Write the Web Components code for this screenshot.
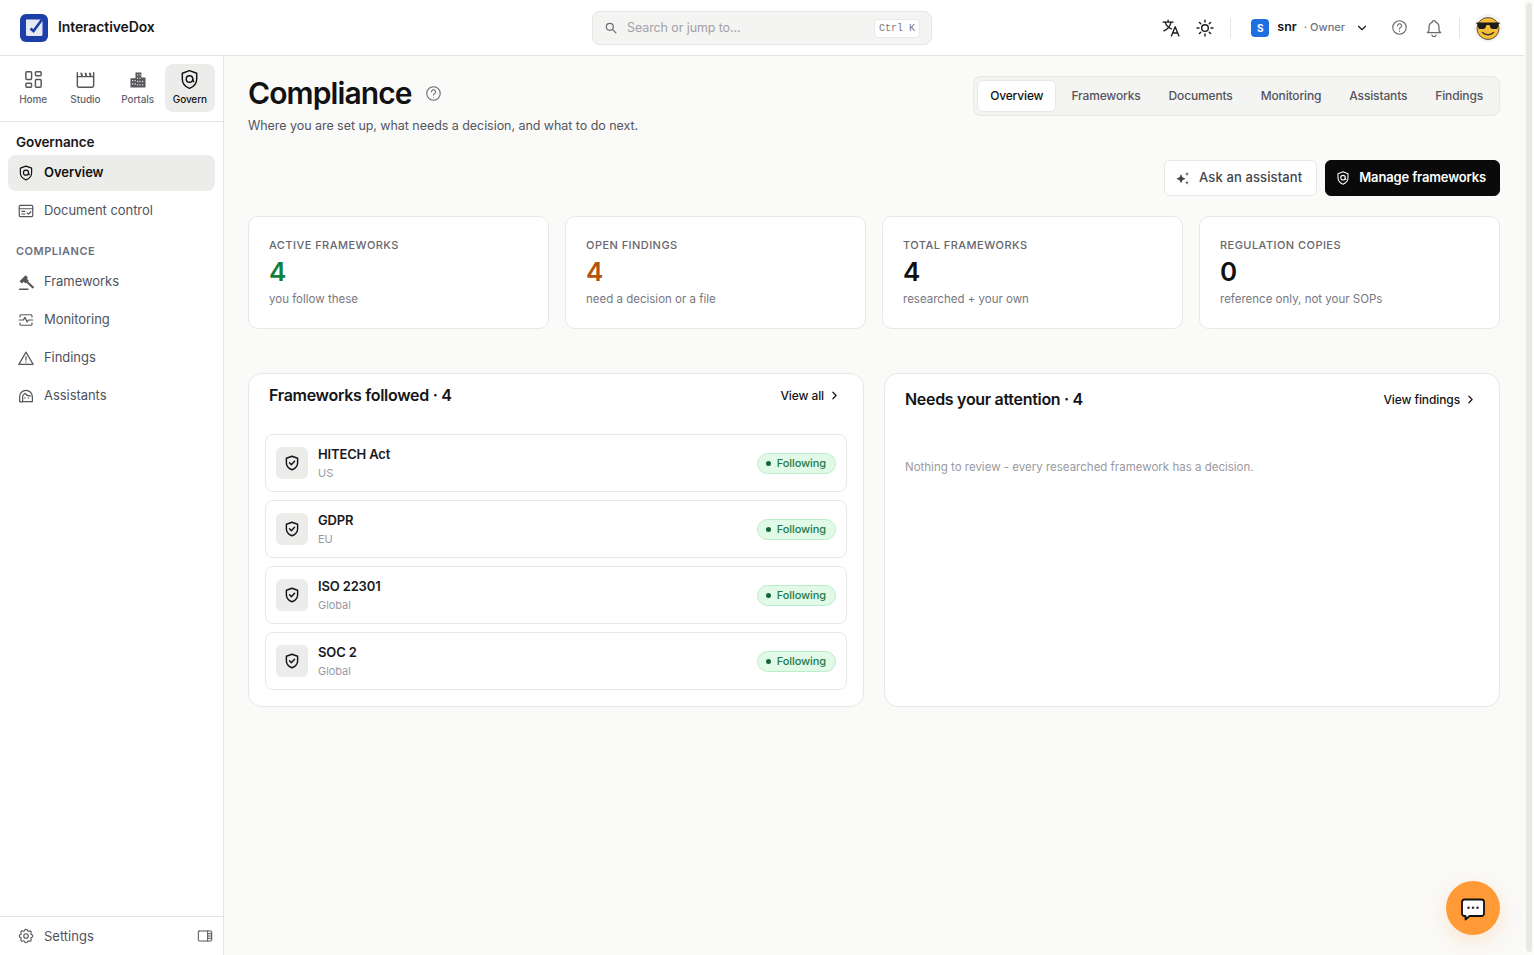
<!DOCTYPE html>
<html lang="en">
<head>
<meta charset="utf-8">
<title>Compliance - InteractiveDox</title>
<style>
  html, body { margin: 0; height: 100%; overflow: hidden; background: #fff; }
  body { font-family: Inter, "Liberation Sans", sans-serif; color: #111; display: flex; }
</style>
</head>
<body>
<app-shell></app-shell>
<fake-scrollbar></fake-scrollbar>

<script>
// shared stroke icons, keyed by name
const ICONS = {
  home: '<path d="M5 4h4a1 1 0 0 1 1 1v6a1 1 0 0 1-1 1H5a1 1 0 0 1-1-1V5a1 1 0 0 1 1-1z"/><path d="M5 16h4a1 1 0 0 1 1 1v2a1 1 0 0 1-1 1H5a1 1 0 0 1-1-1v-2a1 1 0 0 1 1-1z"/><path d="M15 12h4a1 1 0 0 1 1 1v6a1 1 0 0 1-1 1h-4a1 1 0 0 1-1-1v-6a1 1 0 0 1 1-1z"/><path d="M15 4h4a1 1 0 0 1 1 1v2a1 1 0 0 1-1 1h-4a1 1 0 0 1-1-1V5a1 1 0 0 1 1-1z"/>',
  studio: '<path d="M3.5 9h17v9.500a1.500 1.500 0 0 1-1.500 1.500H5a1.500 1.500 0 0 1-1.500-1.500z"/><path d="M3.500 5v4M20.500 5v4"/><path fill="currentColor" stroke="none" d="M6.500 5h2l1 4h-2zM11 5h2l1 4h-2zM15.500 5h2l1 4h-2z"/>',
  portals: '<path fill="currentColor" stroke="none" d="M9 3h7v6h5v12H3V10h6V3zm2 2v1.600h1.200V5H11zm2.800 0v1.600H15V5h-1.200zM11 9v1.600h1.200V9H11zm2.800 0v1.600H15V9h-1.200zM5 12v1.600h1.200V12H5zm3 0v1.600h1.200V12H8zm3 1v1.600h1.200V13H11zm2.800 0v1.600H15V13h-1.200zm3.200 0v1.600h1.200V13H17zM5 16v1.600h1.200V16H5zm3 0v1.600h1.200V16H8zm3 1v1.600h1.200V17H11zm2.800 0v1.600H15V17h-1.200zm3.200 0v1.600h1.200V17H17z"/>',
  shield: '<path d="M12 2.800l7.500 2.700v6.200c0 4.400-3 7.800-7.500 9.500-4.500-1.700-7.500-5.100-7.500-9.500V5.500z"/><circle cx="12" cy="11.500" r="3.400"/><path d="M15.400 11.500c0 1.500.3 2.400 1 2.800"/>',
  doc: '<rect x="3" y="4.500" width="18" height="15" rx="1.500"/><path d="M3 9h18"/><path d="M6.500 12.500h4M6.500 16h4"/><path d="M13.500 14.500l1.800 1.700 3-3.200"/>',
  gavel: '<path d="M3.500 21.500h11" stroke-width="2"/><path d="M5 12.500l8-8" stroke-width="4.500" stroke-linecap="butt"/><path d="M9.500 8l4 4" stroke-width="6" stroke-linecap="butt"/><path d="M12.500 11l8.500 8" stroke-width="3"/>',
  monitor: '<path d="M4 8V6.500A1.500 1.500 0 0 1 5.500 5h13A1.500 1.500 0 0 1 20 6.500V8"/><path d="M4 16v1.500A1.500 1.500 0 0 0 5.500 19h13a1.500 1.500 0 0 0 1.500-1.500V16"/><path d="M3 12h5.500l2-3.500 3 6 2-2.500H21"/>',
  alert: '<path d="M12 4.200L21.500 20.500h-19z"/><path d="M12 10v5M12 17.500v.3"/>',
  bot: '<path d="M4.500 19.500h-1v-6.500a8.500 8.500 0 0 1 17 0v6.500h-1"/><path d="M4.500 19.500c1 .8 2 .8 3 0V13c0-2 1.500-3.500 3-4.500 2 2.500 5 3.500 8 3.500"/><path d="M10.500 14.500v.5M15 14.500v.5"/><path d="M7.500 19.500h12"/>',
  settings: '<path d="M10.300 4.300c.4-1.700 3-1.700 3.400 0a1.700 1.700 0 0 0 2.600 1.100c1.500-.9 3.300.8 2.400 2.400a1.700 1.700 0 0 0 1.100 2.500c1.700.4 1.700 3 0 3.400a1.700 1.700 0 0 0-1.100 2.600c.9 1.500-.8 3.300-2.400 2.400a1.700 1.700 0 0 0-2.500 1.100c-.4 1.700-3 1.700-3.400 0a1.700 1.700 0 0 0-2.600-1.100c-1.500.9-3.300-.8-2.400-2.400a1.700 1.700 0 0 0-1.100-2.500c-1.700-.4-1.700-3 0-3.400a1.700 1.700 0 0 0 1.100-2.600c-.9-1.500.8-3.300 2.400-2.400 1 .6 2.300.1 2.500-1.100z"/><circle cx="12" cy="12" r="3"/>',
  panel: '<rect x="2" y="4.500" width="20" height="15" rx="1"/><path d="M16 4.500v15"/><path d="M16 8.500h6M16 12h6M16 15.500h6"/>',
  search: '<circle cx="10" cy="10" r="6"/><path d="M20.500 20.500L14.500 14.500"/>',
  translate: '<path d="M2.500 5h12M8.500 2.500V5"/><path d="M12 5c-.8 4.500-4 8.500-8.500 10.500"/><path d="M5 5c1 3.500 3.500 6.500 7.500 8"/><path d="M12.500 21.500l4.500-11 4.500 11M14 18h6"/>',
  sun: '<circle cx="12" cy="12" r="4"/><path d="M12 2.500v2.300M12 19.200v2.300M2.500 12h2.300M19.200 12h2.300M5.300 5.300l1.600 1.600M17.100 17.100l1.600 1.600M5.300 18.700l1.600-1.600M17.100 6.900l1.600-1.600"/>',
  chevdown: '<path d="M6 9l6 6 6-6"/>',
  chevright: '<path d="M9 6l6 6-6 6"/>',
  help: '<circle cx="12" cy="12" r="9.500"/><path d="M9.300 9.500a2.800 2.800 0 1 1 4.300 2.400c-1 .6-1.600 1.200-1.600 2.300"/><path d="M12 17.200v.2"/>',
  bell: '<path d="M10 5a2 2 0 1 1 4 0c2.800 1.200 4 3.500 4 6.200v3.300c0 1.300.7 2.200 2 3H4c1.300-.8 2-1.700 2-3v-3.300C6 8.500 7.200 6.200 10 5z"/><path d="M9.500 20.500a2.600 2.600 0 0 0 5 0"/>',
  sparkle: '<path fill="currentColor" stroke="none" d="M9 6l2.200 4.800 4.800 2.200-4.800 2.200L9 20l-2.200-4.800L2 13l4.800-2.200z"/><path fill="currentColor" stroke="none" d="M18 3l.8 2.200L21 6l-2.200.8L18 9l-.8-2.200L15 6l2.200-.8zM18 16l.8 2.200 2.200.8-2.200.8L18 22l-.8-2.200L15 19l2.200-.8z"/>',
  shieldcheck: '<path d="M12 3l7.500 2.700v5.800c0 4.500-3 7.800-7.500 9.500-4.500-1.700-7.500-5-7.500-9.500V5.700z"/><path d="M8.700 11.800l2.400 2.400 4.300-4.500"/>'
};

function icon(name, size, sw) {
  return `<svg width="${size}" height="${size}" viewBox="0 0 24 24" fill="none" stroke="currentColor" stroke-width="${sw || 1.7}" stroke-linecap="round" stroke-linejoin="round" aria-hidden="true">${ICONS[name]}</svg>`;
}

class TopBar extends HTMLElement {
  connectedCallback() {
    this.attachShadow({ mode: 'open' });
    this.shadowRoot.innerHTML = `
      <style>
        :host {
          display: grid;
          grid-template-columns: 1fr 340px 1fr;
          align-items: center;
          height: 55px;
          background: #fff;
          border-bottom: 1px solid #e5e5e3;
          padding: 0 22px 0 20px;
        }
        .brand { display: flex; align-items: center; gap: 10px; font-size: 14px; font-weight: 600; color: #17171a; letter-spacing: -0.12px; }
        .brand span { margin-top: -2px; }
        .search {
          display: flex; align-items: center; height: 34px; box-sizing: border-box;
          background: #f4f4f3; border: 1px solid #e5e5e3; border-radius: 8px; padding: 0 11px;
          color: #a1a1a6; font-size: 12.5px; letter-spacing: -0.1px; margin-left: 1px; margin-right: -1px;
        }
        .search svg { color: #6b6b70; margin-right: 9px; }
        .search span { margin-top: -1px; }
        kbd {
          margin-left: auto; background: #fff; border: 1px solid #e8e8e6; border-radius: 4px; letter-spacing: 0;
          font: 10px "Liberation Mono", monospace; color: #77777c; padding: 3px 4px 3px 4px; line-height: 11px; position: relative; top: 0.5px;
        }
        .right { display: flex; align-items: center; justify-content: flex-end; }
        .right svg { display: block; }
        .ic { color: #1b1b1f; }
        .sep { width: 1px; height: 20px; background: #e5e5e3; }
        .ws { width: 18px; height: 18px; border-radius: 4px; background: #1f6fe0; color: #fff; font-size: 10px; font-weight: 700; display: grid; place-items: center; }
        .name { font-size: 12.5px; font-weight: 600; color: #17171a; margin-left: 8px; margin-top: -2px; }
        .role { font-size: 11px; font-weight: 500; color: #6f7480; margin-left: 7px; margin-top: -1px; }
        .grey { color: #6b6b70; }
      </style>
      <div class="brand">
        <svg width="28" height="28" viewBox="0 0 28 28" aria-hidden="true">
          <rect width="28" height="28" rx="6" fill="#1c3faa"/>
          <path d="M7.500 5.500h14a1 1 0 0 1 1 1v14a1.500 1.500 0 0 1-1.500 1.500H7.500a1.500 1.500 0 0 1-1.500-1.500v-14a1 1 0 0 1 1.500-1z" fill="#e6eaf3"/>
          <path d="M10.500 14.500l3 2.500 8.500-11.500" fill="none" stroke="#1c3faa" stroke-width="2.600"/>
        </svg>
        <span>InteractiveDox</span>
      </div>
      <div class="search">${icon('search', 14, 2)}<span>Search or jump to...</span><kbd>Ctrl K</kbd></div>
      <div class="right">
        <span class="ic">${icon('translate', 20, 1.6)}</span>
        <span class="ic" style="margin-left:14px">${icon('sun', 20, 1.7)}</span>
        <span class="sep" style="margin-left:15px"></span>
        <span class="ws" style="margin-left:20px">S</span>
        <span class="name">snr</span>
        <span class="role">· Owner</span>
        <span class="ic" style="margin-left:10px">${icon('chevdown', 14, 2)}</span>
        <span class="grey" style="margin-left:22px">${icon('help', 17, 1.6)}</span>
        <span class="grey" style="margin-left:16px">${icon('bell', 20, 1.5)}</span>
        <span class="sep" style="margin-left:15px"></span>
        <svg style="margin-left:14px" width="28" height="28" viewBox="0 0 28 28" aria-hidden="true">
          <circle cx="14" cy="14" r="14" fill="#f3f3f2"/>
          <circle cx="14" cy="14.500" r="11" fill="#f6bd3b" stroke="#3a3325" stroke-width=".8"/>
          <path d="M2.500 8.500h23v1.500h-1l-.8 3.500c-.2 1-1 1.500-2 1.500h-3c-1.500 0-2.200-1-2.700-2.500l-.5-1.500h-3l-.5 1.500c-.5 1.500-1.200 2.500-2.700 2.500h-3c-1 0-1.800-.5-2-1.500l-.8-3.500h-1z" fill="#1c1c1c"/>
          <path d="M8.500 18.500c2.700 3 8.300 3 11 0" fill="none" stroke="#3a3325" stroke-width="1.300" stroke-linecap="round"/>
        </svg>
      </div>
    `;
  }
}

class RailItem extends HTMLElement {
  connectedCallback() {
    this.attachShadow({ mode: 'open' });
    const active = this.hasAttribute('active');
    const size = this.getAttribute('size') || 23;
    this.shadowRoot.innerHTML = `
      <style>
        :host {
          display: flex; flex-direction: column; align-items: center; justify-content: center;
          height: 48px; border-radius: 8px; font-size: 10px; line-height: 12px; font-weight: 500; gap: 2px; letter-spacing: -0.1px;
          color: ${active ? '#111' : '#5f6470'};
          background: ${active ? '#ececeb' : 'transparent'};
          box-sizing: border-box; padding-bottom: 3px;
        }
        .ico { height: 23px; display: grid; place-items: center; }
        svg { display: block; color: ${active ? '#111' : '#55555a'}; }
      </style>
      <div class="ico">${icon(this.getAttribute('icon'), size, 1.5)}</div>
      <slot></slot>
    `;
  }
}

class NavItem extends HTMLElement {
  connectedCallback() {
    this.attachShadow({ mode: 'open' });
    const active = this.hasAttribute('active');
    this.shadowRoot.innerHTML = `
      <style>
        :host {
          display: flex; align-items: center; gap: 9px; height: 36px; padding: 0 9px 0 9px;
          border-radius: 8px; font-size: 13px; letter-spacing: -0.05px;
          font-weight: ${active ? 600 : 400};
          color: ${active ? '#111' : '#4e5360'};
          background: ${active ? '#ececeb' : 'transparent'};
        }
        svg { display: block; flex: none; color: ${active ? '#111' : '#55555a'}; }
        span { margin-top: -2px; }
      </style>
      ${icon(this.getAttribute('icon'), 18, 1.6)}
      <span><slot></slot></span>
    `;
  }
}

class SideBar extends HTMLElement {
  connectedCallback() {
    this.attachShadow({ mode: 'open' });
    this.shadowRoot.innerHTML = `
      <style>
        :host {
          display: flex; flex-direction: column; width: 224px; box-sizing: border-box;
          background: #fff; border-right: 1px solid #e5e5e3; flex: none;
        }
        .rail { display: grid; grid-template-columns: repeat(4, 1fr); gap: 2px; padding: 8px 8px 9px; border-bottom: 1px solid #e5e5e3; }
        nav { display: flex; flex-direction: column; gap: 2px; padding: 0 8px; flex: 1; }
        h2 { font-size: 13.5px; font-weight: 600; color: #17171a; margin: 12px 16px 5px; line-height: 16px; letter-spacing: -0.1px; }
        h3 { font-size: 11px; font-weight: 600; letter-spacing: .5px; color: #6b7080; margin: 13px 8px 4px; line-height: 14px; }
        .foot { display: flex; align-items: center; height: 38px; border-top: 1px solid #e5e5e3; padding: 0 10px 0 17px; gap: 9px; font-size: 13px; color: #4e5360; }
        .foot svg { display: block; color: #55555a; }
        .foot svg:last-child { margin-left: auto; }
      </style>
      <div class="rail">
        <rail-item icon="home">Home</rail-item>
        <rail-item icon="studio">Studio</rail-item>
        <rail-item icon="portals" size="20">Portals</rail-item>
        <rail-item icon="shield" active>Govern</rail-item>
      </div>
      <h2>Governance</h2>
      <nav>
        <nav-item icon="shield" active>Overview</nav-item>
        <nav-item icon="doc">Document control</nav-item>
        <h3>COMPLIANCE</h3>
        <nav-item icon="gavel">Frameworks</nav-item>
        <nav-item icon="monitor">Monitoring</nav-item>
        <nav-item icon="alert">Findings</nav-item>
        <nav-item icon="bot">Assistants</nav-item>
      </nav>
      <div class="foot">${icon('settings', 18, 1.5)}<span>Settings</span>${icon('panel', 16, 1.5)}</div>
    `;
  }
}

class PageTabs extends HTMLElement {
  connectedCallback() {
    this.attachShadow({ mode: 'open' });
    const tabs = ['Overview', 'Frameworks', 'Documents', 'Monitoring', 'Assistants', 'Findings'];
    this.shadowRoot.innerHTML = `
      <style>
        :host {
          display: flex; gap: 2px; padding: 3px; height: 40px; box-sizing: border-box;
          background: #f4f4f3; border: 1px solid #e8e8e6; border-radius: 8px;
        }
        span { display: flex; align-items: center; padding: 0 12px 1px; font-size: 12px; font-weight: 500; letter-spacing: -0.15px; color: #55555d; border: 1px solid transparent; border-radius: 6px; }
        .on { background: #fff; color: #111; border-color: #e8e8e6; }
      </style>
      ${tabs.map((t, i) => `<span class="${i === 0 ? 'on' : ''}">${t}</span>`).join('')}
    `;
  }
}

class ActionButton extends HTMLElement {
  connectedCallback() {
    this.attachShadow({ mode: 'open' });
    const primary = this.hasAttribute('primary');
    this.shadowRoot.innerHTML = `
      <style>
        :host {
          display: flex; align-items: center; gap: 8px; height: 36px; box-sizing: border-box;
          padding: ${primary ? '0 13px 0 9px' : '0 14px 0 10px'}; border-radius: 6px; font-size: 13px;
          font-weight: ${primary ? 600 : 500};
          letter-spacing: ${primary ? '-0.15px' : '0.12px'};
          color: ${primary ? '#fff' : '#45454c'};
          background: ${primary ? '#0a0a0a' : '#fff'};
          border: 1px solid ${primary ? '#0a0a0a' : '#e8e8e6'};
        }
        svg { display: block; }
        span { margin-top: -2px; }
      </style>
      ${icon(this.getAttribute('icon'), 16, 1.6)}
      <span><slot></slot></span>
    `;
  }
}

class StatCard extends HTMLElement {
  connectedCallback() {
    this.attachShadow({ mode: 'open' });
    this.shadowRoot.innerHTML = `
      <style>
        :host {
          display: block; height: 113px; box-sizing: border-box; padding: 21px 20px;
          background: #fff; border: 1px solid #e8e8e6; border-radius: 10px;
        }
        .label { font-size: 11px; font-weight: 500; letter-spacing: .45px; line-height: 14px; color: #66666e; }
        .value { font-size: 26px; font-weight: 600; line-height: 30px; margin-top: 5px; color: ${this.getAttribute('color') || '#111'}; }
        .note { font-size: 11.5px; line-height: 16px; margin-top: 4px; color: #77777f; }
      </style>
      <div class="label">${this.getAttribute('label')}</div>
      <div class="value">${this.getAttribute('value')}</div>
      <div class="note"><slot></slot></div>
    `;
  }
}

class PanelCard extends HTMLElement {
  connectedCallback() {
    this.attachShadow({ mode: 'open' });
    this.shadowRoot.innerHTML = `
      <style>
        :host {
          display: flex; flex-direction: column; box-sizing: border-box; height: 334px;
          background: #fff; border: 1px solid #e8e8e6; border-radius: 14px;
        }
        header { display: flex; align-items: center; justify-content: space-between; }
        h2 { margin: 0; font-size: 16px; font-weight: 600; line-height: 20px; letter-spacing: -0.3px; color: #141417; }
        a { display: flex; align-items: center; gap: 4px; font-size: 12px; font-weight: 500; letter-spacing: -0.1px; color: #141417; }
        svg { display: block; }
      </style>
      <header part="head">
        <h2>${this.getAttribute('heading')}</h2>
        <a>${this.getAttribute('link')}${icon('chevright', 13, 2.2)}</a>
      </header>
      <slot></slot>
    `;
    const head = this.shadowRoot.querySelector('header');
    head.style.padding = this.getAttribute('head-padding');
  }
}

class FrameworkRow extends HTMLElement {
  connectedCallback() {
    this.attachShadow({ mode: 'open' });
    this.shadowRoot.innerHTML = `
      <style>
        :host {
          display: flex; align-items: center; height: 58px; box-sizing: border-box; padding: 0 10px;
          border: 1px solid #e8e8e6; border-radius: 8px; background: #fff;
        }
        .tile { width: 32px; height: 32px; border-radius: 6px; background: #ececeb; display: grid; place-items: center; color: #141417; flex: none; }
        .tile svg { display: block; }
        .text { margin-left: 10px; flex: 1; }
        .name { font-size: 13px; font-weight: 600; line-height: 16px; color: #1a1a1e; letter-spacing: -0.15px; }
        .region { font-size: 11px; line-height: 14px; color: #9a9aa2; margin-top: 4px; letter-spacing: -0.05px; }
        .pill {
          display: flex; align-items: center; gap: 6px; height: 21px; box-sizing: border-box; padding: 0 9px 0 8px;
          background: #e1f9e7; border: 1px solid #bcedca; border-radius: 999px;
          font-size: 11px; font-weight: 500; letter-spacing: -0.1px; color: #1f7a4a;
        }
        .dot { width: 5px; height: 5px; border-radius: 50%; background: #14663a; }
      </style>
      <div class="tile">${icon('shieldcheck', 18, 1.9)}</div>
      <div class="text">
        <div class="name">${this.getAttribute('name')}</div>
        <div class="region">${this.getAttribute('region')}</div>
      </div>
      <div class="pill"><span class="dot"></span>Following</div>
    `;
  }
}

class ChatFab extends HTMLElement {
  connectedCallback() {
    this.attachShadow({ mode: 'open' });
    this.shadowRoot.innerHTML = `
      <style>
        :host {
          position: absolute; right: 24px; bottom: 20px; width: 54px; height: 54px; border-radius: 50%;
          background: #ff9a37; display: grid; place-items: center;
          box-shadow: 0 6px 22px rgba(255, 154, 55, .22);
        }
        svg { display: block; }
      </style>
      <svg width="26" height="26" viewBox="0 0 26 26" aria-hidden="true">
        <path d="M4.500 4.500h17a2.500 2.500 0 0 1 2.500 2.500v11.500a2.500 2.500 0 0 1-2.500 2.500H9.500l-4 3.500v-3.500h-1A2.500 2.500 0 0 1 2 18.500V7a2.500 2.500 0 0 1 2.500-2.500z" fill="#fff" stroke="#111" stroke-width="1.800" stroke-linejoin="round"/>
        <circle cx="8.500" cy="12.700" r="1.300" fill="#333"/><circle cx="13" cy="12.700" r="1.300" fill="#333"/><circle cx="17.500" cy="12.700" r="1.300" fill="#333"/>
      </svg>
    `;
  }
}

class CompliancePage extends HTMLElement {
  connectedCallback() {
    this.attachShadow({ mode: 'open' });
    this.shadowRoot.innerHTML = `
      <style>
        :host { display: block; flex: 1; min-width: 0; background: #fafaf9; padding: 20px 24px; box-sizing: border-box; position: relative; }
        .head { display: flex; justify-content: space-between; align-items: flex-start; height: 84px; }
        .title { display: flex; align-items: center; gap: 13px; margin-top: -1px; }
        h1 { margin: 0; font-size: 30px; font-weight: 600; line-height: 36px; letter-spacing: -0.9px; color: #111; }
        .title svg { display: block; color: #66666e; }
        p { margin: 6px 0 0; font-size: 12.5px; line-height: 18px; letter-spacing: -0.05px; color: #55555d; }
        .actions { display: flex; justify-content: flex-end; gap: 8px; }
        .stats { display: grid; grid-template-columns: repeat(4, 1fr); gap: 16px; margin-top: 20px; }
        .panels { display: grid; grid-template-columns: 1fr 1fr; gap: 20px; margin-top: 44px; }
        .rows { display: flex; flex-direction: column; gap: 8px; padding: 0 16px; margin-top: 29px; }
        .empty { padding: 0 20px; margin: 50px 0 0; font-size: 11.5px; line-height: 16px; color: #9a9aa2; }
      </style>
      <div class="head">
        <div>
          <div class="title"><h1>Compliance</h1>${icon('help', 17, 1.5)}</div>
          <p>Where you are set up, what needs a decision, and what to do next.</p>
        </div>
        <page-tabs></page-tabs>
      </div>
      <div class="actions">
        <action-button icon="sparkle">Ask an assistant</action-button>
        <action-button icon="shield" primary>Manage frameworks</action-button>
      </div>
      <div class="stats">
        <stat-card label="ACTIVE FRAMEWORKS" value="4" color="#15803d">you follow these</stat-card>
        <stat-card label="OPEN FINDINGS" value="4" color="#b45309">need a decision or a file</stat-card>
        <stat-card label="TOTAL FRAMEWORKS" value="4">researched + your own</stat-card>
        <stat-card label="REGULATION COPIES" value="0">reference only, not your SOPs</stat-card>
      </div>
      <div class="panels">
        <panel-card heading="Frameworks followed · 4" link="View all" head-padding="11px 22px 0 20px">
          <div class="rows">
            <framework-row name="HITECH Act" region="US"></framework-row>
            <framework-row name="GDPR" region="EU"></framework-row>
            <framework-row name="ISO 22301" region="Global"></framework-row>
            <framework-row name="SOC 2" region="Global"></framework-row>
          </div>
        </panel-card>
        <panel-card heading="Needs your attention · 4" link="View findings" head-padding="15px 22px 0 20px">
          <div class="empty">Nothing to review - every researched framework has a decision.</div>
        </panel-card>
      </div>
      <chat-fab></chat-fab>
    `;
  }
}

class AppShell extends HTMLElement {
  connectedCallback() {
    this.attachShadow({ mode: 'open' });
    this.shadowRoot.innerHTML = `
      <style>
        :host { display: flex; flex-direction: column; flex: 1; min-width: 0; height: 955px; }
        .body { display: flex; flex: 1; min-height: 0; }
      </style>
      <top-bar></top-bar>
      <div class="body">
        <side-bar></side-bar>
        <compliance-page></compliance-page>
      </div>
    `;
  }
}

class FakeScrollbar extends HTMLElement {
  connectedCallback() {
    this.attachShadow({ mode: 'open' });
    this.shadowRoot.innerHTML = `
      <style>
        :host { display: flex; width: 10px; flex: none; box-sizing: border-box; padding: 3px 2px 3px 2px; background: #fbfbfa; }
        div { flex: 1; background: #e8e8e5; border-radius: 4px; }
      </style>
      <div></div>
    `;
  }
}

customElements.define('top-bar', TopBar);
customElements.define('rail-item', RailItem);
customElements.define('nav-item', NavItem);
customElements.define('side-bar', SideBar);
customElements.define('page-tabs', PageTabs);
customElements.define('action-button', ActionButton);
customElements.define('stat-card', StatCard);
customElements.define('panel-card', PanelCard);
customElements.define('framework-row', FrameworkRow);
customElements.define('chat-fab', ChatFab);
customElements.define('compliance-page', CompliancePage);
customElements.define('fake-scrollbar', FakeScrollbar);
customElements.define('app-shell', AppShell);
</script>
</body>
</html>
